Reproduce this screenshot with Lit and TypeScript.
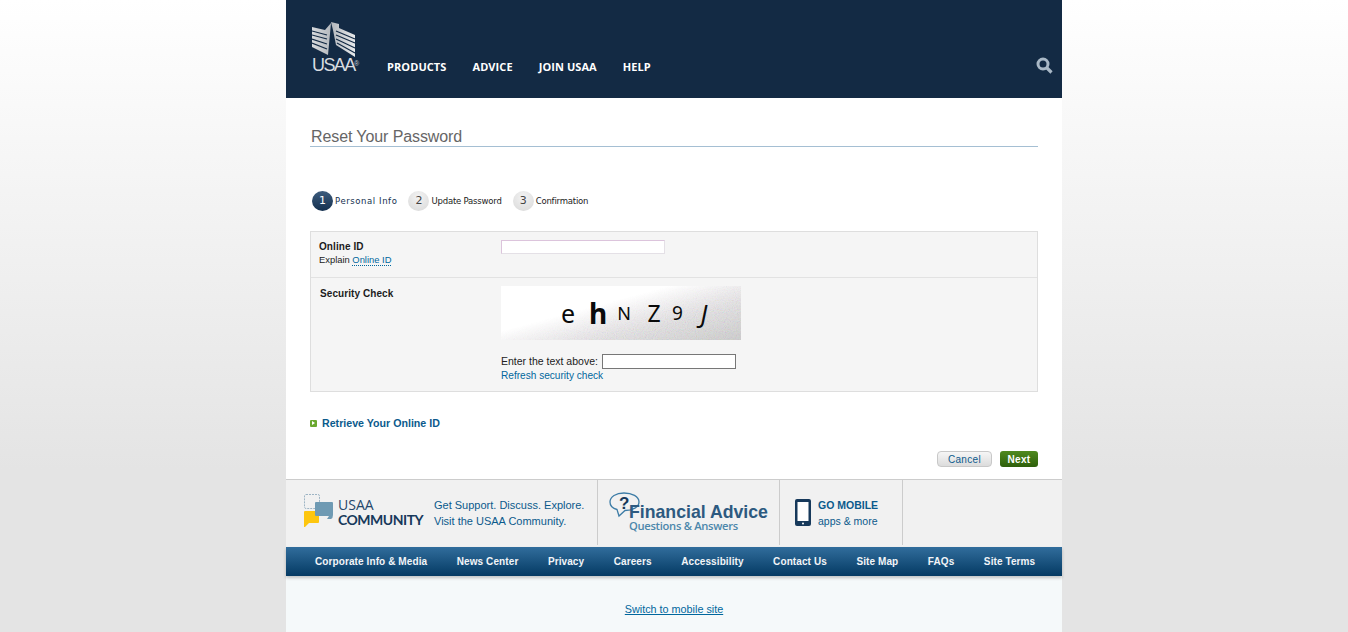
import { LitElement, html, css, svg } from "lit";
import { customElement } from "lit/decorators.js";

const NAV = ["PRODUCTS", "ADVICE", "JOIN USAA", "HELP"];
const FOOT = ["Corporate Info & Media", "News Center", "Privacy", "Careers", "Accessibility", "Contact Us", "Site Map", "FAQs", "Site Terms"];
const STEPS = [
  { n: "1", label: "Personal Info", on: true },
  { n: "2", label: "Update Password", on: false },
  { n: "3", label: "Confirmation", on: false },
];
const CAPTCHA = [
  { c: "e", s: 25, w: 400, it: false, m: 0 },
  { c: "h", s: 28, w: 700, it: false, m: 10 },
  { c: "N", s: 18, w: 400, it: false, m: 6 },
  { c: "Z", s: 23, w: 400, it: false, m: 10 },
  { c: "9", s: 19, w: 400, it: false, m: 3.5 },
  { c: "J", s: 25, w: 400, it: true, m: 6.5 },
];

const eagle = svg`<svg class="eagle" width="44" height="36" viewBox="0 0 44 36">
  <defs><linearGradient id="wing" x1="0" x2="1" y1="0" y2="0"><stop offset="0" stop-color="#d7dadd"/><stop offset=".45" stop-color="#b4b8bd"/><stop offset="1" stop-color="#e8eaec"/></linearGradient></defs>
  <path d="M0 5 13 8 19 1 16 33 0 25Z M19 0 27 2 27 6 43 13 43 35 24 23 21 8Z" fill="url(#wing)"/>
  <path d="M0 9 15 13M0 13 15 17M0 17 15 22M0 21 15 27M24 9 43 17M24 13 43 21M24 17 43 26M25 21 43 31" stroke="#132a44" stroke-width="1.2" fill="none"/>
</svg>`;

const search = svg`<svg width="17" height="17" viewBox="0 0 17 17"><circle cx="7" cy="7" r="5" fill="none" stroke="#a9b8c6" stroke-width="3"/><path d="M10.5 10.5 15.5 15.5" stroke="#a9b8c6" stroke-width="3.2"/></svg>`;

const bubbles = svg`<svg width="31" height="35" viewBox="0 0 31 35">
  <rect x="1.5" y="1.5" width="15" height="14" rx="1.5" fill="none" stroke="#9db4c4" stroke-dasharray="2 1"/>
  <path d="M2 18H15Q16 18 16 19V29Q16 30 15 30H6L2 34H1V19Q1 18 2 18Z" fill="#fdc60f"/>
  <path d="M13 9H29Q30 9 30 10V22Q30 25 28 26H24L26 23H13Q12 23 12 22V10Q12 9 13 9Z" fill="#6f9ab3"/>
</svg>`;

const question = svg`<svg width="32" height="26" viewBox="0 0 32 26"><path d="M15 1C7 1 1 4.500 1 10 1 14 4 16.500 8 17.500L10 24 16 18.500C24 18.500 30 15 30 10 30 4.500 23 1 15 1Z" fill="#f1f1f1" stroke="#3d7ca6" stroke-width="1.3"/></svg>`;

const phone = svg`<svg width="16" height="27" viewBox="0 0 16 27"><rect width="16" height="27" rx="2" fill="#17395b"/><rect x="2.500" y="3" width="11" height="19" fill="#fff"/><circle cx="8" cy="24.500" r="1" fill="#fff"/></svg>`;

@customElement("app-root")
export class AppRoot extends LitElement {
  static styles = css`
    :host { display: block; height: 632px; overflow: hidden; font-family: "Liberation Sans", Arial, sans-serif;
      background: linear-gradient(#fff 0, #e4e4e4 470px, #e4e4e4 100%); }
    .page { width: 776px; height: 632px; margin-left: 286px; display: flex; flex-direction: column; background: #fff; }
    a { color: #00679d; text-decoration: none; }

    .top { height: 98px; flex: none; background: #132a44; display: flex; align-items: flex-end; padding: 0 9px 0 26px; box-sizing: border-box; }
    .logo { width: 50px; height: 76px; display: flex; flex-direction: column; margin-bottom: 25px; position: relative; justify-content: flex-end; }
    .logo .word { font: 400 18px/15px "Liberation Sans", sans-serif; color: #d9dde0; letter-spacing: -1.6px; }
    .logo .reg { position: absolute; left: 42px; bottom: 5px; font-size: 7px; line-height: 8px; color: #c9ced3; }
    .nav { display: flex; gap: 26px; margin-left: 25px; padding-bottom: 25px; flex: 1; }
    .nav span { font: 700 11px/13px "Open Sans", "Liberation Sans", sans-serif; color: #fff; letter-spacing: .08px; }
    .srch { padding-bottom: 24px; display: flex; }

    main { flex: 1; padding: 0 24px; }
    h1 { margin: 29px 0 0; height: 19px; font: 400 16px/20px "Liberation Sans", sans-serif; color: #666; border-bottom: 1px solid #a5bfd3; padding-left: 1px; letter-spacing: -.1px; }
    .steps { display: flex; margin: 44px 0 0 2px; height: 20px; align-items: center; }
    .step { display: flex; align-items: center; gap: 2px; margin-right: 11px; }
    .num { width: 21px; height: 20px; border-radius: 50%; font: 400 11px/19px "DejaVu Sans", sans-serif; text-align: center; background: radial-gradient(circle at 50% 30%, #f3f3f3, #d8d8d8); color: #444; }
    .on .num { background: linear-gradient(#3d5c7d, #14304f); color: #fff; }
    .lbl { font: 400 8.500px/12px "DejaVu Sans", sans-serif; color: #222; letter-spacing: -.2px; }
    .on .lbl { letter-spacing: .58px; color: #14304f; }

    .panel { margin-top: 20px; background: #f5f5f5; border: 1px solid #dedede; }
    .row { display: grid; grid-template-columns: 190px 1fr; }
    .row + .row { border-top: 1px solid #e2e2e2; }
    .r1 { height: 45px; }
    .r2 { height: 113px; }
    .lead { padding: 8px 0 0 8px; font-size: 9.400px; line-height: 14px; color: #222; }
    .r2 .lead { padding: 9px 0 0 9px; }
    .lead b { display: block; font: 700 10px/13px "Liberation Sans", sans-serif; color: #1c1c1c; letter-spacing: .08px; }
    .lead a { border-bottom: 1px dotted #00679d; }
    .id { display: block; width: 164px; height: 14px; margin-top: 8px; box-sizing: border-box; border: 1px solid #e4e0e6; border-top-color: #dcc4dc; border-left-color: #dcc4dc; background: #fff; }
    .captcha { margin-top: 8px; width: 240px; height: 54px; display: flex; align-items: center; padding-left: 57px; box-sizing: border-box; position: relative;
      background: linear-gradient(165deg, #fff 38%, #eceaec 62%, #cfcfcf 100%); }
    .noise { position: absolute; inset: 0; opacity: .35; -webkit-mask-image: linear-gradient(165deg, transparent 38%, #000 70%); mask-image: linear-gradient(165deg, transparent 38%, #000 70%); }
    .captcha span { color: #0a0a0a; font-family: "Noto Sans", sans-serif; width: 20px; text-align: center; flex: none; line-height: 34px; position: relative; }
    .it { font-style: italic; }
    .enter { display: flex; align-items: center; margin-top: 14px; font-size: 10.500px; line-height: 15px; color: #222; gap: 4px; }
    .enter i { display: block; width: 134px; height: 15px; box-sizing: border-box; border: 1px solid #777; background: #fff; }
    .refresh { display: block; font-size: 10.100px; line-height: 14px; }

    .retrieve { display: flex; align-items: center; margin-top: 24px; gap: 5px; height: 14px; }
    .retrieve i { display: block; width: 7px; height: 7px; background: #6aa82f; border-radius: 1px; position: relative; }
    .retrieve i::after { content: ""; position: absolute; left: 2px; top: 1.500px; border-left: 3px solid #fff; border-top: 2px solid transparent; border-bottom: 2px solid transparent; }
    .retrieve a { font: 700 10.650px/14px "Liberation Sans", sans-serif; color: #0b5a8c; }
    .btns { display: flex; justify-content: flex-end; gap: 8px; margin-top: 21px; }
    .btn { width: 55px; height: 16px; box-sizing: border-box; border: 1px solid #c8c8c8; border-radius: 4px; background: linear-gradient(#f6f6f6, #dcdcdc); color: #0b5a8c; font: 400 10px/15px "Liberation Sans", sans-serif; letter-spacing: .35px; text-align: center; }
    .go { width: 38px; border: none; background: linear-gradient(#4f8a1f, #2e5f0b); color: #fff; font: 700 10px/17px "Liberation Sans", sans-serif; border-radius: 3px; }

    .promo { flex: none; height: 68px; background: #f1f1f1; border-top: 1px solid #ccc; box-sizing: border-box; display: flex; }
    .cell { height: 65px; box-sizing: border-box; border-right: 1px solid #ccc; display: flex; align-items: center; }
    .c1 { width: 312px; padding-left: 17px; }
    .c1 > svg { margin-bottom: 4px; flex: none; }
    .c2 { width: 182px; position: relative; }
    .c3 { width: 123px; padding-left: 15px; gap: 7px; }
    .cm { margin-left: 4px; width: 85px; flex: none; padding-bottom: 2px; }
    .cm div { font: 400 14px/15px "Open Sans", sans-serif; color: #24476b; }
    .cm b { display: block; font: 700 14px/15px "Lato", "Liberation Sans", sans-serif; color: #17395b; white-space: nowrap; letter-spacing: -.5px; }
    .tx { margin-left: 11px; font-size: 11px; line-height: 16px; color: #0b5a8c; white-space: nowrap; }
    .fa-ic { position: absolute; left: 11px; top: 12px; width: 32px; height: 26px; }
    .fa-ic em { position: absolute; left: 10px; top: 3px; font: 700 17px/18px "Liberation Sans", sans-serif; color: #17395b; }
    .fa { position: absolute; left: 31px; top: 24px; white-space: nowrap; }
    .fa b { display: block; font: 700 17.700px/17px "Liberation Sans", sans-serif; color: #2d5a80; }
    .fa span { display: block; font: 600 11.200px/10px "Open Sans", sans-serif; color: #4c87ab; letter-spacing: -.3px; }
    .mob { font-size: 10.500px; line-height: 16px; color: #0b5a8c; white-space: nowrap; }
    .mob b { display: block; font-size: 10.500px; }

    .foot { flex: none; height: 29px; background: linear-gradient(#316d9c, #043a63); box-shadow: 0 2px 3px rgba(0,0,0,.22); display: flex; gap: 29.500px; padding-left: 29px; box-sizing: border-box; align-items: center; position: relative; }
    .foot span { font: 700 10px/30px "Liberation Sans", sans-serif; color: #f2f5f8; letter-spacing: .1px; white-space: nowrap; }
    .end { flex: none; height: 56px; background: #f5f9fa; text-align: center; padding-top: 23px; box-sizing: border-box; }
    .end a { font: 400 10.800px/14px "Liberation Sans", sans-serif; text-decoration: underline; }
  `;

  render() {
    return html`<div class="page">
      <header class="top">
        <div class="logo">${eagle}<div class="word">USAA</div><span class="reg">®</span></div>
        <nav class="nav">${NAV.map((n) => html`<span>${n}</span>`)}</nav>
        <div class="srch">${search}</div>
      </header>
      <main>
        <h1>Reset Your Password</h1>
        <div class="steps">${STEPS.map((s) => html`<div class="step ${s.on ? "on" : ""}"><div class="num">${s.n}</div><div class="lbl">${s.label}</div></div>`)}</div>
        <section class="panel">
          <div class="row r1">
            <div class="lead"><b>Online ID</b>Explain <a href="#">Online ID</a></div>
            <div><i class="id"></i></div>
          </div>
          <div class="row r2">
            <div class="lead"><b>Security Check</b></div>
            <div>
              <div class="captcha">
                <svg class="noise" width="240" height="54"><filter id="nz"><feTurbulence type="fractalNoise" baseFrequency=".9" numOctaves="2" /></filter><rect width="240" height="54" filter="url(#nz)" /></svg>
                ${CAPTCHA.map((c) => html`<span class=${c.it ? "it" : ""} style="font-size:${c.s}px;font-weight:${c.w};margin-left:${c.m}px">${c.c}</span>`)}
              </div>
              <div class="enter">Enter the text above: <i></i></div>
              <a class="refresh" href="#">Refresh security check</a>
            </div>
          </div>
        </section>
        <div class="retrieve"><i></i><a href="#">Retrieve Your Online ID</a></div>
        <div class="btns"><div class="btn">Cancel</div><div class="btn go">Next</div></div>
      </main>
      <section class="promo">
        <div class="cell c1">${bubbles}
          <div class="cm"><div>USAA</div><b>COMMUNITY</b></div>
          <div class="tx">Get Support. Discuss. Explore.<br />Visit the USAA Community.</div>
        </div>
        <div class="cell c2"><span class="fa-ic">${question}<em>?</em></span>
          <div class="fa"><b>Financial Advice</b><span>Questions &amp; Answers</span></div>
        </div>
        <div class="cell c3">${phone}<div class="mob"><b>GO MOBILE</b>apps &amp; more</div></div>
      </section>
      <nav class="foot">${FOOT.map((f) => html`<span>${f}</span>`)}</nav>
      <div class="end"><a href="#">Switch to mobile site</a></div>
    </div>`;
  }
}
